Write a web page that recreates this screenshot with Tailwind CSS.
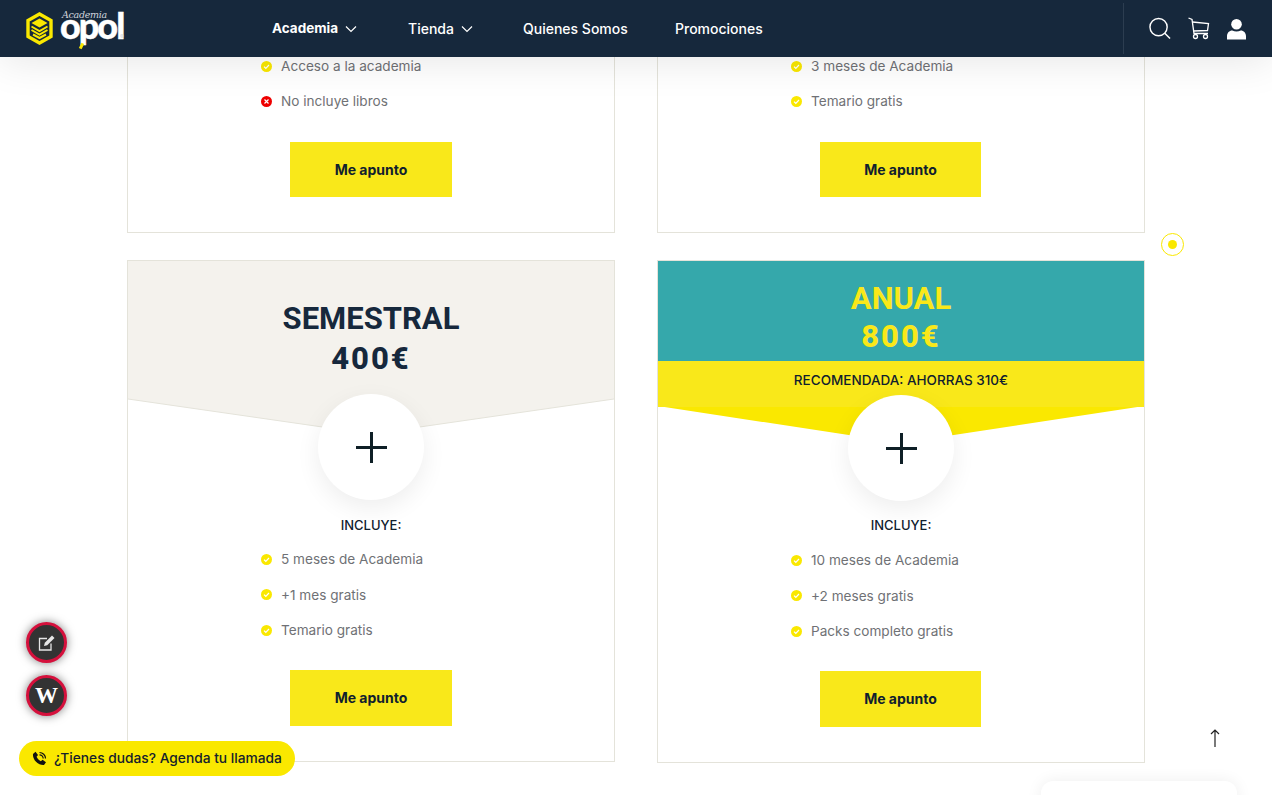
<!DOCTYPE html>
<html lang="es">
<head>
    <meta charset="UTF-8">
    <meta name="viewport" content="width=device-width, initial-scale=1.0">
    <title>Academia Opol</title>
    <script src="https://cdn.jsdelivr.net/npm/@tailwindcss/browser@4"></script>
</head>
<body class="bg-white h-[795px] overflow-hidden relative font-['Inter',sans-serif]">

    <!-- cabecera -->
    <header class="relative z-20 h-[57px] bg-[#16283c] flex items-center shadow-[0_4px_40px_rgba(0,0,0,0.1)] text-white text-[14px]">
        <div class="w-[272px] pl-[26px] flex items-center shrink-0">
            <svg width="27" height="33" viewBox="0 0 27 33">
                <path d="M13.5 2 L25 8.5 V24.5 L13.5 31 L2 24.5 V8.5 Z" fill="none" stroke="#fae800" stroke-width="3.4"/>
                <path d="M13.5 6.5 L21.5 11 L13.5 15.5 L5.5 11 Z" fill="#fae800"/>
                <path d="M5.5 14.5 L13.5 19 L21.5 14.5 M5.5 18 L13.5 22.5 L21.5 18 M7 22.5 L13.5 26 L20 22.5" fill="none" stroke="#fae800" stroke-width="2"/>
            </svg>
            <div class="relative ml-[7px] w-[68px] h-[40px]">
                <span class="absolute left-[2px] top-[1px] text-[9.5px] italic font-light text-gray-300 font-['DejaVu_Serif',serif] tracking-[-0.3px] leading-[10px]">Academia</span>
                <span class="absolute left-0 top-[3px] text-[36px] font-black leading-[26px] tracking-[-2px] font-['Lato',sans-serif] [-webkit-text-stroke:0.4px_white]">opol</span>
                <span class="absolute left-[60px] top-[25px] text-[6px] leading-[6px] text-gray-300">®</span>
                <span class="absolute left-[20px] top-[34px] w-[3px] h-[6px] bg-[#fae800] rotate-[25deg]"></span>
            </div>
        </div>
        <nav class="flex items-center font-medium">
            <a class="font-bold text-[13.5px] flex items-center gap-[7px] w-[136px]">Academia
                <svg width="12" height="12" viewBox="0 0 12 12" fill="none" stroke="white" stroke-width="1.2"><path d="M1 3.5 L6 8.5 L11 3.5"/></svg>
            </a>
            <a class="flex items-center gap-[7px] w-[115px]">Tienda
                <svg width="12" height="12" viewBox="0 0 12 12" fill="none" stroke="white" stroke-width="1.2"><path d="M1 3.5 L6 8.5 L11 3.5"/></svg>
            </a>
            <a class="w-[152px]">Quienes Somos</a>
            <a>Promociones</a>
        </nav>
        <div class="ml-auto h-[51px] border-l border-[#2c3d50] mr-[26px] pl-[25px] flex items-center gap-[17px]">
            <svg width="22" height="23" viewBox="0 0 23 23" fill="none" stroke="white" stroke-width="1.5"><circle cx="10" cy="10" r="9"/><path d="M16.5 16.5 L22 22"/></svg>
            <svg width="22" height="23" viewBox="0 0 22 23" fill="none" stroke="white" stroke-width="1.3"><path d="M0.5 1 L4 2.5 L6 16.5 H20"/><path d="M4.5 5 L20.5 6.5 L19.5 13.5 L5.5 14"/><circle cx="7.5" cy="19.5" r="2"/><circle cx="17.5" cy="19.5" r="2"/></svg>
            <svg width="19" height="22" viewBox="0 0 20 22" fill="white"><circle cx="10" cy="6" r="5.6"/><path d="M0 22 V18.5 C0 15 2.5 12.5 5.5 12.5 C8.5 14 11.5 14 14.5 12.5 C17.5 12.5 20 15 20 18.5 V22 Z"/></svg>
        </div>
    </header>

    <main class="grid grid-cols-[488px_488px] gap-x-[42px] pl-[127px]">

        <!-- fila superior, cortada por el scroll -->
        <section class="h-[176px] border-x border-b border-[#e4e3da] pl-[133px]">
            <ul class="text-[13.6px] text-[#6f7175] leading-[20px]">
                <li class="h-[35px] flex items-center gap-[9px] pb-[17px]">
                    <svg width="11" height="11" viewBox="0 0 11 11"><circle cx="5.5" cy="5.5" r="5.5" fill="#fae800"/><path d="M3 5.6 L4.8 7.3 L8 4" fill="none" stroke="white" stroke-width="1.2"/></svg>
                    Acceso a la academia
                </li>
                <li class="h-[35px] flex items-center gap-[9px] pb-[17px]">
                    <svg width="11" height="11" viewBox="0 0 11 11"><circle cx="5.5" cy="5.5" r="5.5" fill="#ee0000"/><path d="M3.5 3.5 L7.5 7.5 M7.5 3.5 L3.5 7.5" fill="none" stroke="white" stroke-width="1.2"/></svg>
                    No incluye libros
                </li>
            </ul>
            <a class="mt-[15px] ml-[29px] w-[162px] h-[55px] pb-px flex items-center justify-center bg-[#f9e81a] text-[#10202e] text-[14px] font-bold">Me apunto</a>
        </section>

        <section class="h-[176px] border-x border-b border-[#e4e3da] pl-[133px]">
            <ul class="text-[13.6px] text-[#6f7175] leading-[20px]">
                <li class="h-[35px] flex items-center gap-[9px] pb-[17px]">
                    <svg width="11" height="11" viewBox="0 0 11 11"><circle cx="5.5" cy="5.5" r="5.5" fill="#fae800"/><path d="M3 5.6 L4.8 7.3 L8 4" fill="none" stroke="white" stroke-width="1.2"/></svg>
                    3 meses de Academia
                </li>
                <li class="h-[35px] flex items-center gap-[9px] pb-[17px]">
                    <svg width="11" height="11" viewBox="0 0 11 11"><circle cx="5.5" cy="5.5" r="5.5" fill="#fae800"/><path d="M3 5.6 L4.8 7.3 L8 4" fill="none" stroke="white" stroke-width="1.2"/></svg>
                    Temario gratis
                </li>
            </ul>
            <a class="mt-[15px] ml-[29px] w-[161px] h-[55px] pb-px flex items-center justify-center bg-[#f9e81a] text-[#10202e] text-[14px] font-bold">Me apunto</a>
        </section>

        <!-- semestral -->
        <section class="mt-[27px] h-[502px] border border-[#e4e3da] relative">
            <svg class="absolute inset-0" width="486" height="175" viewBox="0 0 486 175">
                <path d="M0 0 H486 V138 L243 173 L0 138 Z" fill="#f4f2ed"/>
                <path d="M486 138 L243 173 L0 138" fill="none" stroke="#e4e3da"/>
            </svg>
            <div class="relative pt-[38px] text-center text-[#16283c] text-[31px] font-bold leading-[40px] font-['Roboto',sans-serif]">
                <h2>SEMESTRAL</h2>
                <p class="font-extrabold tracking-[2px]">400€</p>
            </div>
            <div class="relative mx-auto mt-[15px] w-[106px] h-[106px] rounded-full bg-white shadow-[0_8px_24px_rgba(0,0,0,0.07)] flex items-center justify-center">
                <svg width="31" height="31" viewBox="0 0 31 31" stroke="#0e1f26" stroke-width="3"><path d="M15.5 0 V31 M0 15.5 H31"/></svg>
            </div>
            <p class="relative mt-[15px] text-center text-[13px] font-medium text-[#10202e] leading-[20px]">INCLUYE:</p>
            <ul class="mt-[14px] pl-[133px] text-[13.6px] text-[#6f7175] leading-[20px]">
                <li class="h-[35.5px] flex items-center gap-[9px] pb-[15px]">
                    <svg width="11" height="11" viewBox="0 0 11 11"><circle cx="5.5" cy="5.5" r="5.5" fill="#fae800"/><path d="M3 5.6 L4.8 7.3 L8 4" fill="none" stroke="white" stroke-width="1.2"/></svg>
                    5 meses de Academia
                </li>
                <li class="h-[35.5px] flex items-center gap-[9px] pb-[15px]">
                    <svg width="11" height="11" viewBox="0 0 11 11"><circle cx="5.5" cy="5.5" r="5.5" fill="#fae800"/><path d="M3 5.6 L4.8 7.3 L8 4" fill="none" stroke="white" stroke-width="1.2"/></svg>
                    +1 mes gratis
                </li>
                <li class="h-[35.5px] flex items-center gap-[9px] pb-[15px]">
                    <svg width="11" height="11" viewBox="0 0 11 11"><circle cx="5.5" cy="5.5" r="5.5" fill="#fae800"/><path d="M3 5.6 L4.8 7.3 L8 4" fill="none" stroke="white" stroke-width="1.2"/></svg>
                    Temario gratis
                </li>
            </ul>
            <a class="mt-[14px] ml-[162px] w-[162px] h-[56px] pb-px flex items-center justify-center bg-[#f9e81a] text-[#10202e] text-[14px] font-bold">Me apunto</a>
        </section>

        <!-- anual -->
        <section class="mt-[27px] h-[503px] border border-[#e4e3da] relative">
            <svg class="absolute left-0 top-[145px]" width="486" height="37" viewBox="0 0 486 37">
                <path d="M0 0 H486 L243 37 Z" fill="#fae800"/>
            </svg>
            <div class="relative h-[100px] bg-[#35a8ab] pt-[19px] text-center text-[#f9e81a] text-[31px] font-bold leading-[38px] font-['Roboto',sans-serif]">
                <h2>ANUAL</h2>
                <p class="font-extrabold tracking-[2px]">800€</p>
            </div>
            <div class="relative h-[46px] bg-[#f9e81a] pt-[9px] text-center text-[13.5px] font-medium text-[#10202e] leading-[20px]">RECOMENDADA: AHORRAS 310€</div>
            <div class="relative mx-auto -mt-[12px] w-[106px] h-[106px] rounded-full bg-white shadow-[0_8px_24px_rgba(0,0,0,0.07)] flex items-center justify-center">
                <svg width="31" height="31" viewBox="0 0 31 31" stroke="#0e1f26" stroke-width="3"><path d="M15.5 0 V31 M0 15.5 H31"/></svg>
            </div>
            <p class="relative mt-[14px] text-center text-[13px] font-medium text-[#10202e] leading-[20px]">INCLUYE:</p>
            <ul class="mt-[15px] pl-[133px] text-[13.6px] text-[#6f7175] leading-[20px]">
                <li class="h-[35.5px] flex items-center gap-[9px] pb-[15px]">
                    <svg width="11" height="11" viewBox="0 0 11 11"><circle cx="5.5" cy="5.5" r="5.5" fill="#fae800"/><path d="M3 5.6 L4.8 7.3 L8 4" fill="none" stroke="white" stroke-width="1.2"/></svg>
                    10 meses de Academia
                </li>
                <li class="h-[35.5px] flex items-center gap-[9px] pb-[15px]">
                    <svg width="11" height="11" viewBox="0 0 11 11"><circle cx="5.5" cy="5.5" r="5.5" fill="#fae800"/><path d="M3 5.6 L4.8 7.3 L8 4" fill="none" stroke="white" stroke-width="1.2"/></svg>
                    +2 meses gratis
                </li>
                <li class="h-[35.5px] flex items-center gap-[9px] pb-[15px]">
                    <svg width="11" height="11" viewBox="0 0 11 11"><circle cx="5.5" cy="5.5" r="5.5" fill="#fae800"/><path d="M3 5.6 L4.8 7.3 L8 4" fill="none" stroke="white" stroke-width="1.2"/></svg>
                    Packs completo gratis
                </li>
            </ul>
            <a class="mt-[14px] ml-[162px] w-[161px] h-[56px] pb-px flex items-center justify-center bg-[#f9e81a] text-[#10202e] text-[14px] font-bold">Me apunto</a>
        </section>
    </main>

    <!-- flotantes -->
    <div class="absolute left-[1161px] top-[233px] w-[23px] h-[23px] rounded-full border border-[#fae800] flex items-center justify-center">
        <span class="w-[9px] h-[9px] rounded-full bg-[#fae800]"></span>
    </div>

    <a class="absolute left-[26px] top-[622px] w-[41px] h-[41px] rounded-full bg-[#333333] border-[3px] border-[#d5103c] shadow-[0_0_10px_rgba(0,0,0,0.5)] flex items-center justify-center">
        <svg width="18" height="18" viewBox="0 0 18 18" fill="none" stroke="#e6e6e6" stroke-width="1.3">
            <path d="M9 4.5 H1.5 V16 H13 V9.5"/>
            <path d="M6 12 L6.8 8.8 L14 1.5 L16.5 4 L9.2 11.2 Z" fill="#e6e6e6" stroke="none"/>
        </svg>
    </a>
    <a class="absolute left-[26px] top-[675px] w-[41px] h-[41px] rounded-full bg-[#333333] border-[3px] border-[#d5103c] shadow-[0_0_10px_rgba(0,0,0,0.5)] flex items-center justify-center text-white text-[23px] font-bold leading-none font-['Liberation_Serif',serif]">W</a>

    <a class="absolute left-[19px] top-[741px] w-[276px] h-[35px] rounded-full bg-[#fae800] flex items-center pl-[13px] gap-[7px] text-[13.75px] text-[#14202c] font-medium">
        <svg width="15" height="15" viewBox="0 0 15 15">
            <path d="M1 3 L3.5 0.8 L6 4 L4.6 5.8 C5.3 7.5 6.8 9.2 8.8 10.2 L10.6 8.8 L14 11.3 L12 14 C6 14.5 0.5 8.5 1 3 Z" fill="#111"/>
            <path d="M7.5 1.5 A6 6 0 0 1 13.5 7.5 M7.5 3.8 A3.7 3.7 0 0 1 11.2 7.5" fill="none" stroke="#111" stroke-width="1.2"/>
        </svg>
        ¿Tienes dudas? Agenda tu llamada
    </a>

    <svg class="absolute left-[1210px] top-[729px]" width="10" height="18" viewBox="0 0 10 18" fill="none" stroke="#222" stroke-width="1.2"><path d="M5 18 V1 M1 5 L5 1 L9 5"/></svg>

    <div class="absolute left-[1041px] top-[781px] w-[196px] h-[40px] rounded-t-[12px] bg-white shadow-[0_0_16px_rgba(0,0,0,0.07)]"></div>
</body>
</html>
